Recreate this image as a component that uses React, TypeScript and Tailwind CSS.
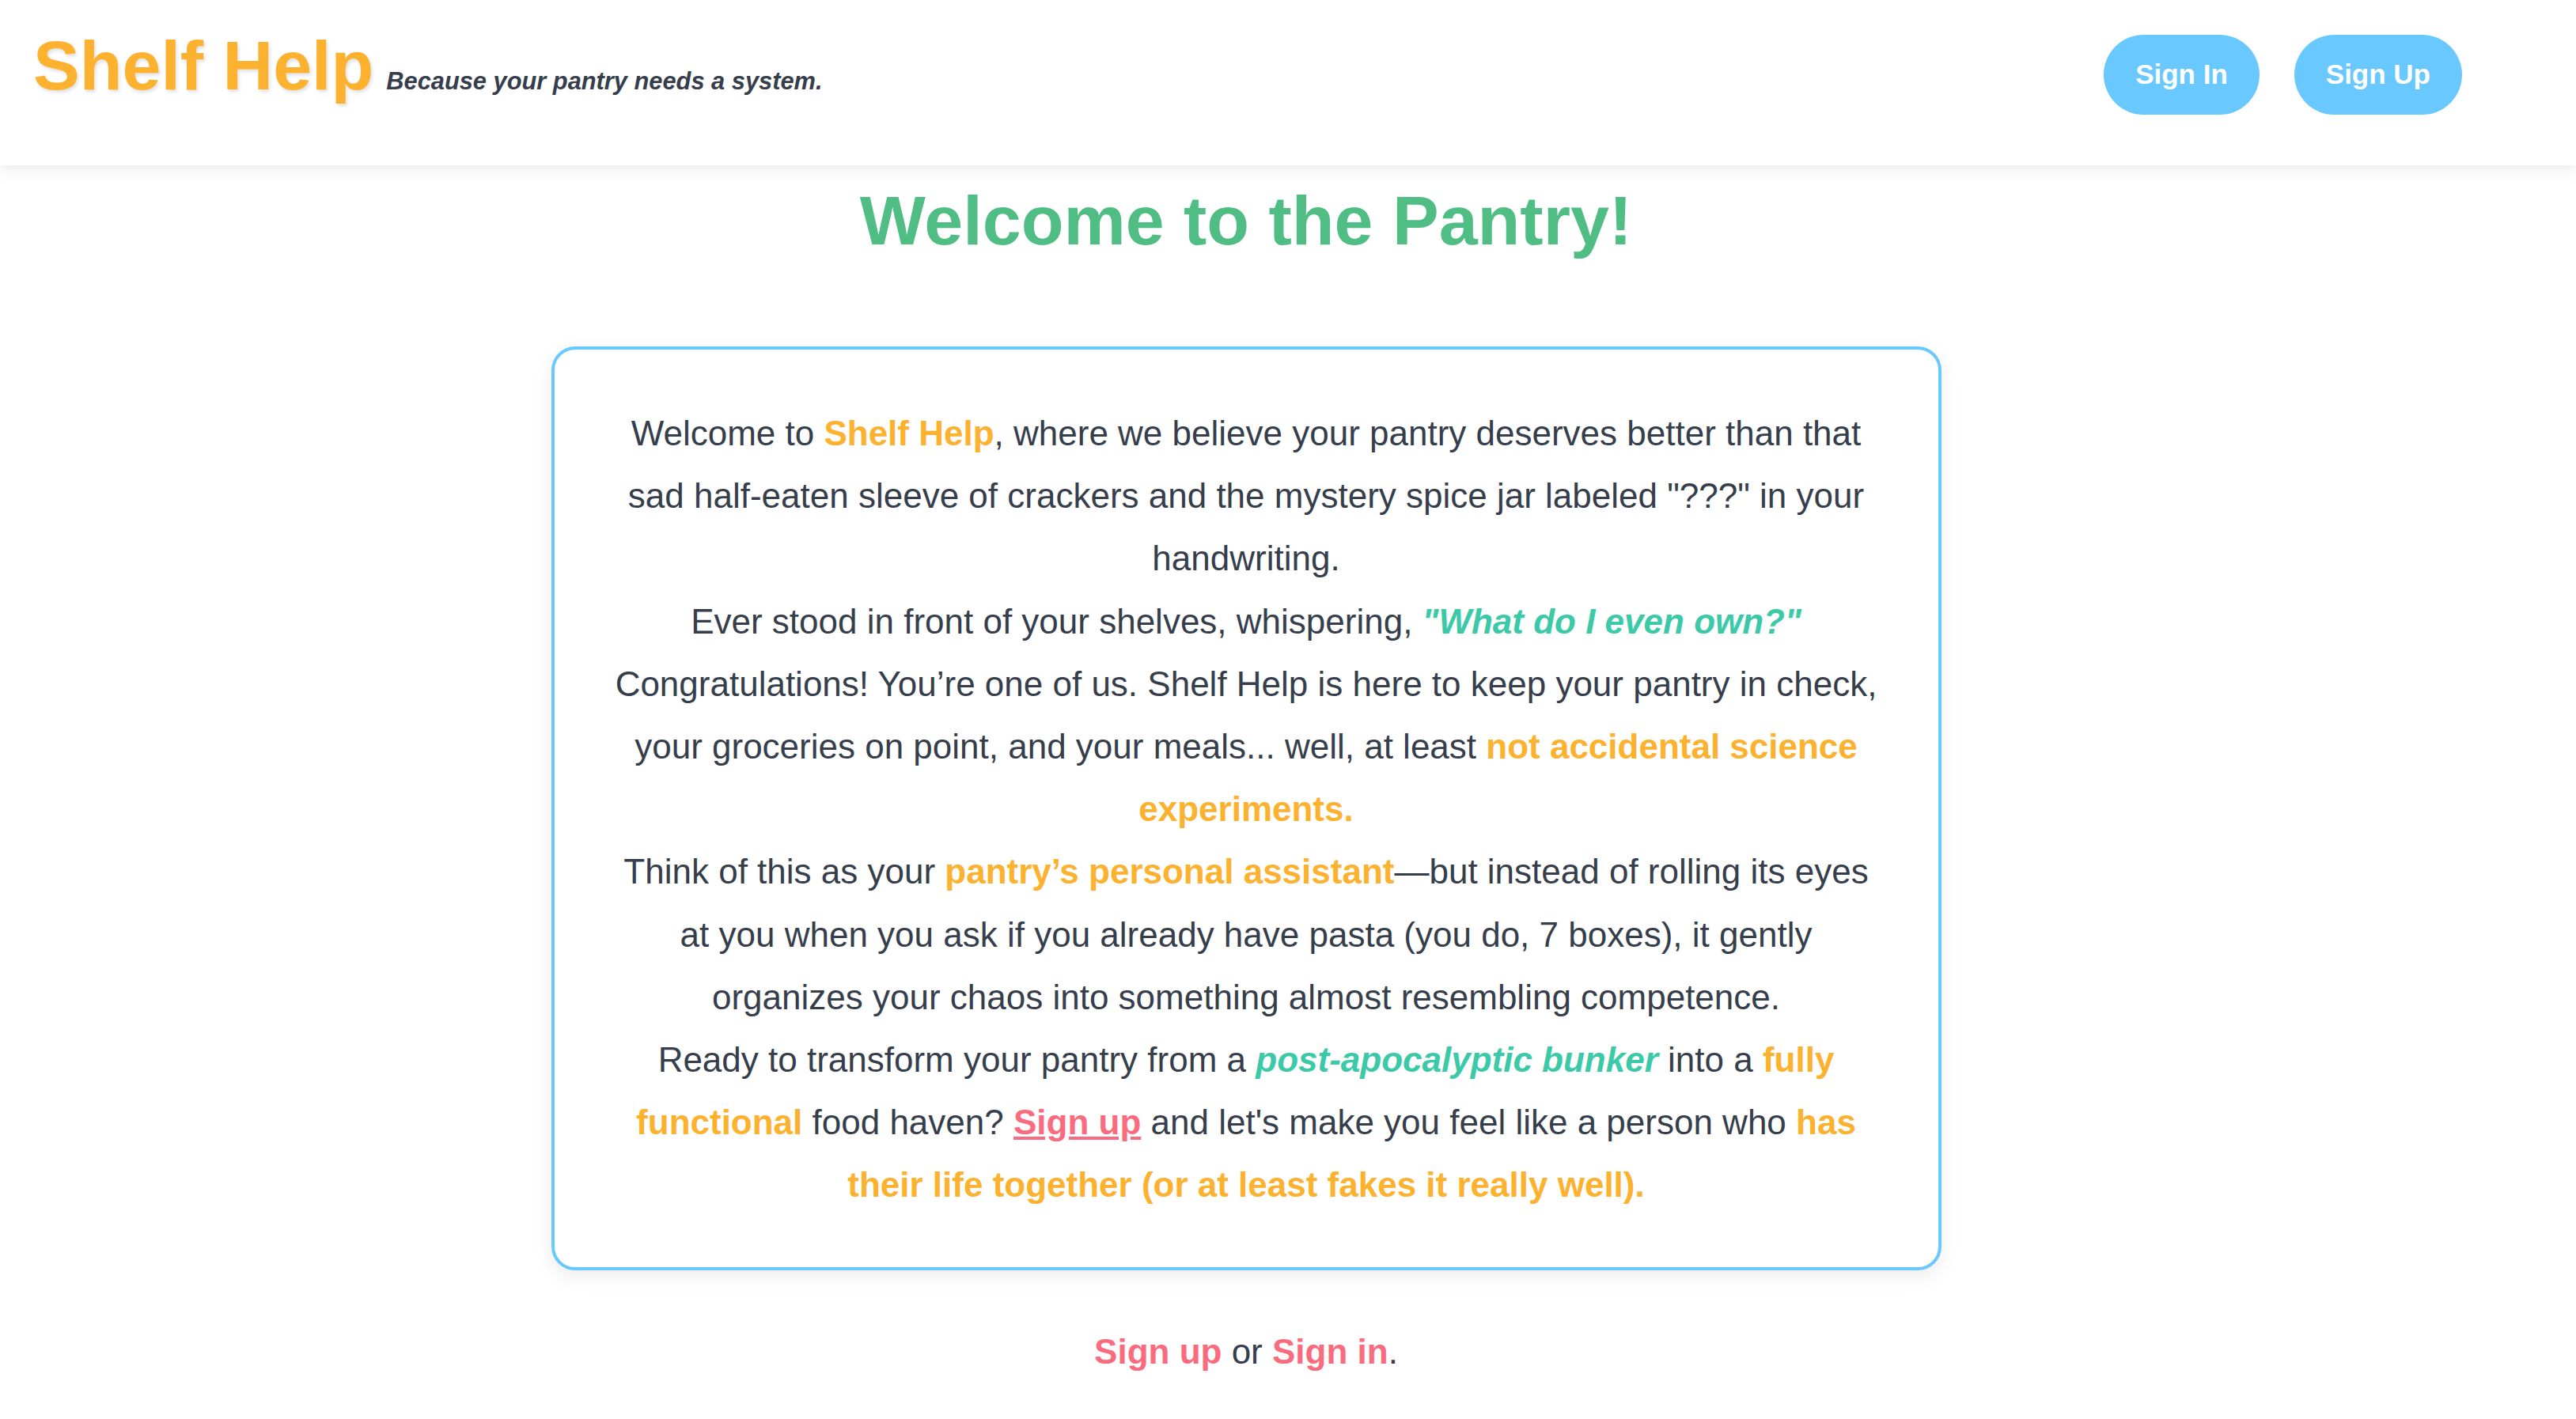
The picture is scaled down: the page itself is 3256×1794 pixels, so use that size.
import React from "react";

const orange = "text-[#fcb12f] font-bold";
const teal = "text-[#3cc9a8] font-bold italic";

export default function App() {
  return (
    <div className="min-h-screen bg-white text-[#363e4c]" style={{ fontFamily: '"Liberation Sans", Arial, sans-serif' }}>
      <header className="relative z-10 h-[209px] bg-white shadow-[0_4px_18px_rgba(0,0,0,0.09)] flex justify-between items-start px-[42px]">
        <div className="flex items-baseline mt-[32px]">
          <span className="text-[88px] leading-[101px] font-bold text-[#fcb12f] [text-shadow:2px_3px_4px_rgba(0,0,0,0.12)]">
            Shelf Help
          </span>
          <span className="ml-[16px] text-[30.8px] italic font-bold text-[#363e4c]">
            Because your pantry needs a system.
          </span>
        </div>
        <div className="flex gap-[44px] mt-[44px] mr-[102px]">
          <button className="h-[101px] px-[40px] rounded-full bg-[#69c8fd] text-white font-bold text-[35px]">
            Sign In
          </button>
          <button className="h-[101px] px-[40px] rounded-full bg-[#69c8fd] text-white font-bold text-[35px]">
            Sign Up
          </button>
        </div>
      </header>
      <main className="pr-[106px] flex flex-col items-center">
        <h1 className="mt-[19px] text-[88px] leading-[101px] font-bold text-[#4fbd84]">
          Welcome to the Pantry!
        </h1>
        <div className="mt-[109px] w-[1757px] border-[4px] border-[#69c8fd] rounded-[30px] bg-white shadow-[0_8px_24px_rgba(0,0,0,0.08)] pt-[66px] pb-[64px] px-[70px] text-center text-[44px] leading-[79.2px]">
          <p>
            Welcome to <span className={orange}>Shelf Help</span>, where we believe your pantry deserves better than that
            sad half-eaten sleeve of crackers and the mystery spice jar labeled "???" in your handwriting.
          </p>
          <p>
            Ever stood in front of your shelves, whispering, <span className={teal}>"What do I even own?"</span>
          </p>
          <p>
            Congratulations! You’re one of us. Shelf Help is here to keep your pantry in check, your groceries on point,
            and your meals... well, at least <span className={orange}>not accidental science experiments.</span>
          </p>
          <p>
            Think of this as your <span className={orange}>pantry’s personal assistant</span>—but instead of rolling its
            eyes at you when you ask if you already have pasta (you do, 7 boxes), it gently organizes your chaos into
            something almost resembling competence.
          </p>
          <p>
            Ready to transform your pantry from a <span className={teal}>post-apocalyptic bunker</span> into a{" "}
            <span className={orange}>fully functional</span> food haven?{" "}
            <a href="#" className="text-[#f96c80] font-bold underline">Sign up</a> and let's make you feel like a person
            who <span className={orange}>has their life together (or at least fakes it really well).</span>
          </p>
        </div>
        <p className="mt-[63px] text-[44px] leading-[79px]">
          <a href="#" className="text-[#f96c80] font-bold">Sign up</a> or{" "}
          <a href="#" className="text-[#f96c80] font-bold">Sign in</a>.
        </p>
      </main>
    </div>
  );
}
